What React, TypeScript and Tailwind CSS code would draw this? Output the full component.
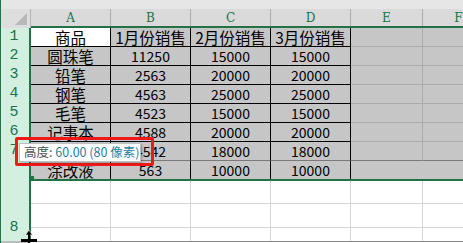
import React from "react";

const GREEN = "border-[#217346]";

const rows: string[][] = [
  ["商品", "1月份销售", "2月份销售", "3月份销售"],
  ["圆珠笔", "11250", "15000", "15000"],
  ["铅笔", "2563", "20000", "20000"],
  ["钢笔", "4563", "25000", "25000"],
  ["毛笔", "4523", "15000", "15000"],
  ["记事本", "4588", "20000", "20000"],
  ["橡皮擦", "4542", "18000", "18000"],
  ["涂改液", "563", "10000", "10000"],
];

const letters = ["A", "B", "C", "D", "E", "F"];

function Cell({ text, r, c }: { text: string; r: number; c: number }) {
  const isNum = /^\d+$/.test(text);
  const bg = r === 0 && c === 0 ? "bg-white" : "bg-[#c6c6c6]";
  // row 7 bottom is covered by the drag guide line, row 8 sits on the green selection edge
  const bottom = r === 7 ? "" : r === 6 ? "border-b border-b-[#7a7a7a]" : "border-b border-b-black";
  return (
    <div
      className={`w-[80px] h-full shrink-0 flex items-center justify-center border-r border-r-black ${bottom} ${bg} ${
        isNum ? "text-[14px] pt-[1px]" : "text-[15.5px]"
      } leading-[17px] text-black whitespace-nowrap`}
    >
      {text}
    </div>
  );
}

function DataRow({ cells, r }: { cells: string[]; r: number }) {
  const last = r === 7;
  const emptyBottom = last ? "" : r === 6 ? "border-b border-b-[#7a7a7a]" : "border-b border-b-[#ababab]";
  return (
    <div className={`flex ${last ? `h-[20px] border-b-2 ${GREEN}` : "h-[19px]"}`}>
      {cells.map((t, c) => (
        <Cell key={c} text={t} r={r} c={c} />
      ))}
      <div className={`w-[72px] h-full shrink-0 bg-[#c6c6c6] ${last ? "" : "border-r border-r-[#ababab]"} ${emptyBottom}`} />
      <div className={`w-[72px] h-full shrink-0 bg-[#c6c6c6] ${emptyBottom}`} />
    </div>
  );
}

function BlankRow({ h, line }: { h: string; line: string }) {
  return (
    <div className={`flex ${h} border-b ${line}`}>
      {[0, 1, 2, 3, 4].map((i) => (
        <div key={i} className={`${i === 4 ? "w-[72px]" : "w-[80px]"} h-full shrink-0 border-r border-r-[#d4d4d4]`} />
      ))}
      <div className="w-[72px] h-full shrink-0" />
    </div>
  );
}

export default function App() {
  return (
    <div className="relative w-[463px] h-[243px] overflow-hidden bg-white border-l border-[#217346] font-['Noto_Sans_CJK_SC','Liberation_Sans',sans-serif]">
      <div className="h-[9px] bg-[#e6e6e6]" />

      {/* column headers */}
      <div className="flex h-[19px]">
        <div className="w-[30px] h-full shrink-0 bg-[#dedede] border-r border-[#b4b4b4] relative">
          <svg className="absolute left-[14px] top-[4px]" width="12" height="12" viewBox="0 0 12 12">
            <polygon points="12,0 12,12 0,12" fill="#b8b8b8" />
          </svg>
        </div>
        <div className={`flex flex-1 border-b-2 ${GREEN} bg-[#dadada]`}>
          {letters.map((l, i) => (
            <div
              key={l}
              className={`${i >= 4 ? "w-[72px]" : "w-[80px]"} h-full shrink-0 flex items-center justify-center border-r border-[#ababab] font-['DejaVu_Serif',serif] text-[12px] text-[#217346]`}
            >
              {l}
            </div>
          ))}
        </div>
      </div>

      <div className="flex">
        {/* row headers */}
        <div className="w-[30px] shrink-0 flex flex-col">
          <div className={`bg-[#d3efe0] border-r-2 ${GREEN} font-['Liberation_Mono',monospace] text-[15px] text-[#217346]`}>
            {[1, 2, 3, 4, 5, 6, 7].map((n) => (
              <div key={n} className="h-[19px] flex items-center justify-center pr-[2px]">
                {n}
              </div>
            ))}
            <div className="h-[80px] flex items-end justify-center pr-[2px] pb-[2px]">8</div>
          </div>
          <div className="h-[2px] bg-[#bdbdbd]" />
        </div>

        {/* cells */}
        <div className="flex-1 flex flex-col">
          {rows.map((cells, r) => (
            <DataRow key={r} cells={cells} r={r} />
          ))}
          <BlankRow h="h-[23px]" line="border-b-[#d4d4d4]" />
          <BlankRow h="h-[24px]" line="border-b-[#d4d4d4]" />
          <BlankRow h="h-[14px]" line="border-b-[#8a8a8a]" />
        </div>
      </div>

      {/* fill handle */}
      <div className="absolute left-[28px] top-[176px] w-[5px] h-[5px] bg-[#217346]" />

      {/* height tooltip, marked with a red frame */}
      <div className="absolute left-[14px] top-[137px] w-[139px] h-[29px] border-[3px] border-[#f01818] rounded-[2px]" />
      <div className="absolute left-[18px] top-[143px] w-[122px] h-[19px] bg-white border border-[#bfbfbf] shadow-[1px_1px_2px_rgba(0,0,0,0.25)] flex items-center pl-[4px] text-[12.5px] leading-none whitespace-nowrap">
        <span className="text-[#505050]">高度:&nbsp;</span>
        <span className="text-[#1f82a0]">60.00 (80 像素)</span>
      </div>

      {/* row resize cursor */}
      <svg className="absolute left-[18px] top-[229px]" width="20" height="14" viewBox="0 0 20 14">
        <polygon points="10,1 6.5,6 13.5,6" fill="#000" stroke="#fff" strokeWidth="0.6" />
        <rect x="9" y="5" width="2" height="9" fill="#000" />
        <rect x="2" y="10" width="16" height="3" fill="#000" />
      </svg>
    </div>
  );
}
